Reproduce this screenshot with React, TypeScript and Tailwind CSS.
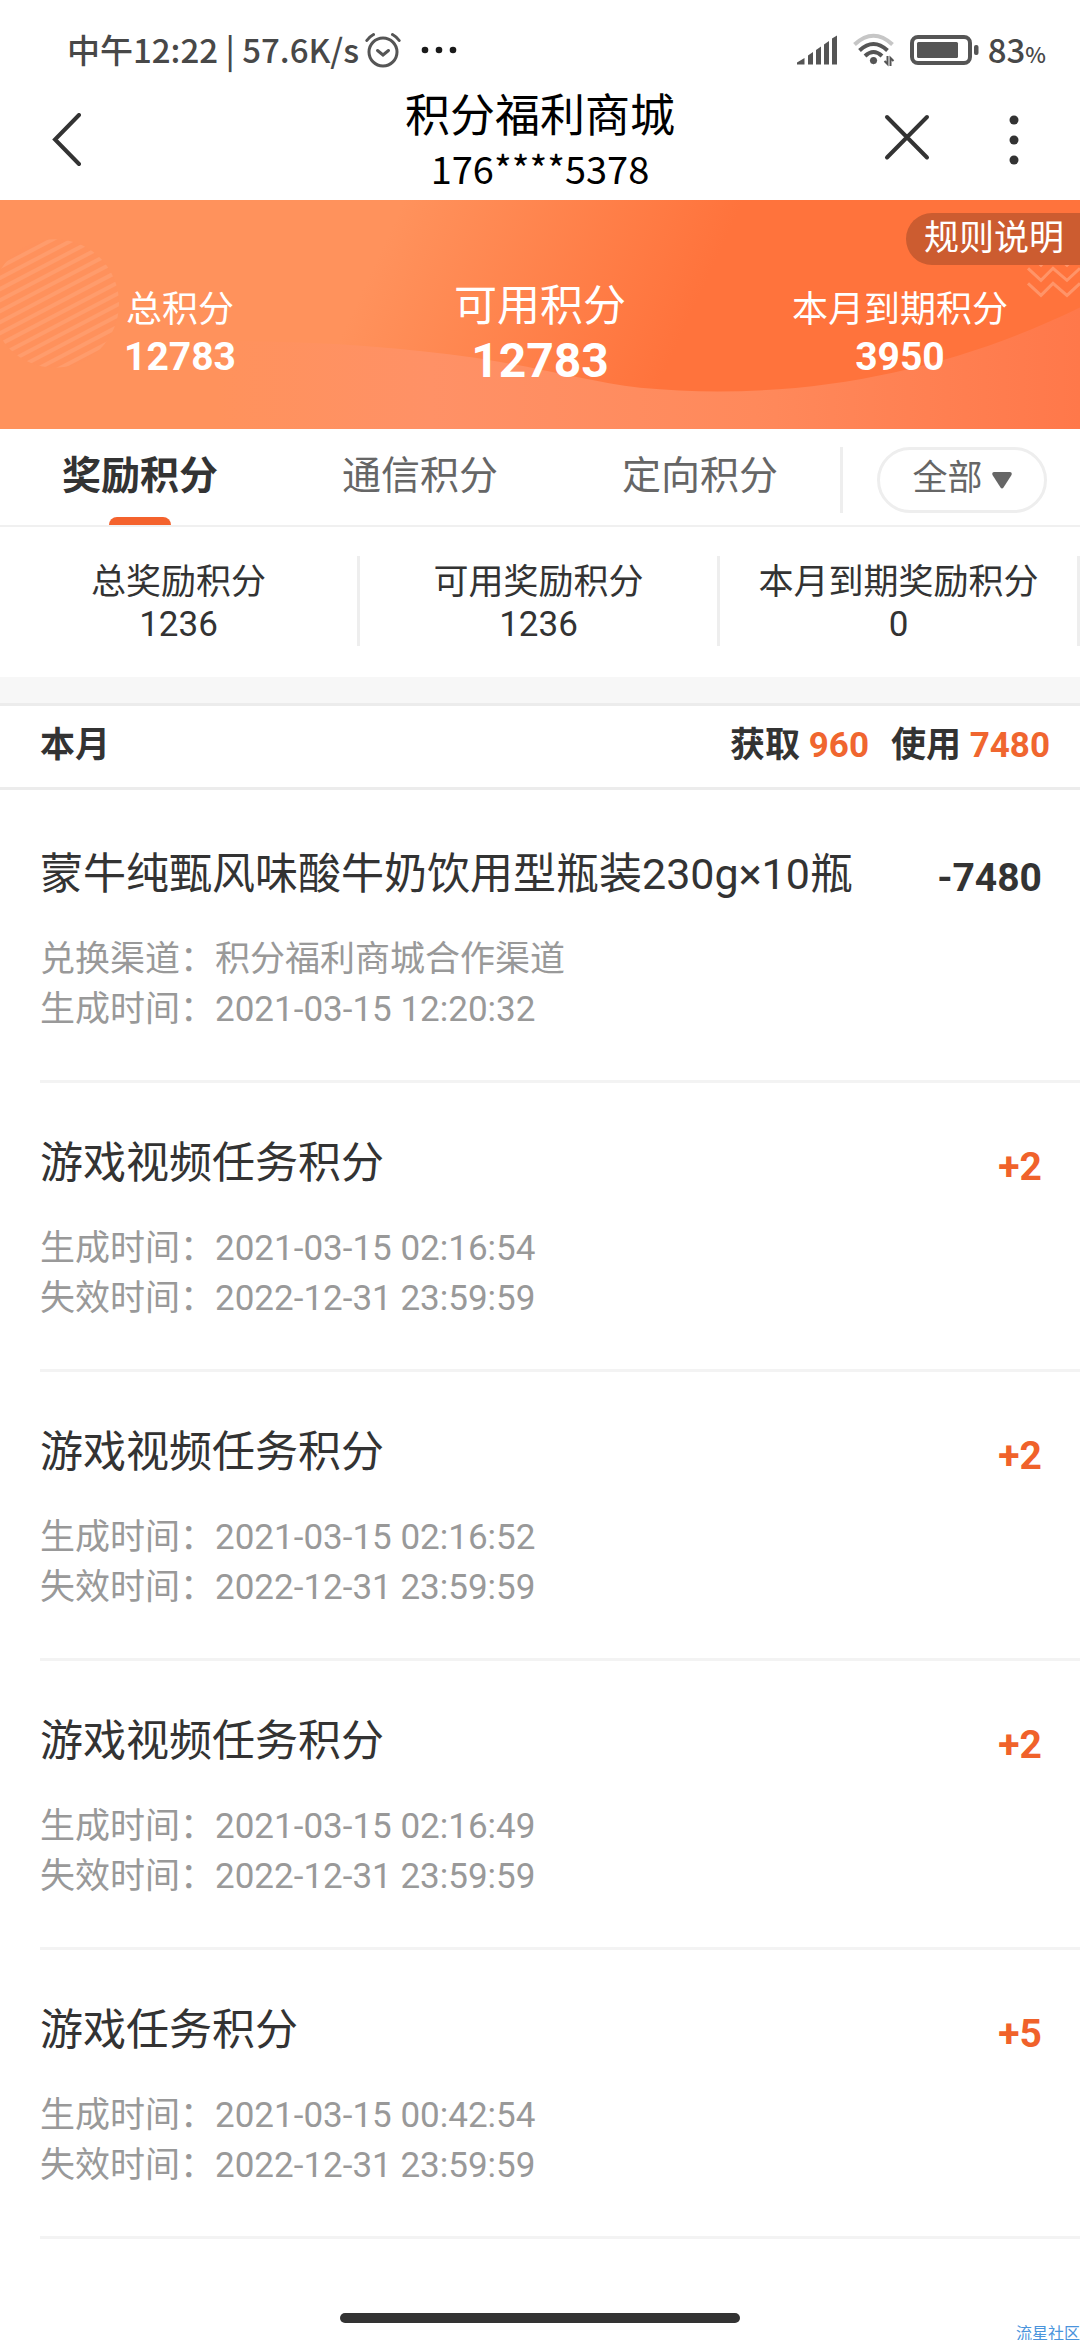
import { useState } from 'react';
import clsx from 'clsx';

interface PointRecord {
  title: string;
  amount: number;
  details: { label: string; value: string }[];
}

const RECORDS: PointRecord[] = [
  {
    title: '蒙牛纯甄风味酸牛奶饮用型瓶装230g×10瓶',
    amount: -7480,
    details: [
      { label: '兑换渠道', value: '积分福利商城合作渠道' },
      { label: '生成时间', value: '2021-03-15 12:20:32' },
    ],
  },
  {
    title: '游戏视频任务积分',
    amount: 2,
    details: [
      { label: '生成时间', value: '2021-03-15 02:16:54' },
      { label: '失效时间', value: '2022-12-31 23:59:59' },
    ],
  },
  {
    title: '游戏视频任务积分',
    amount: 2,
    details: [
      { label: '生成时间', value: '2021-03-15 02:16:52' },
      { label: '失效时间', value: '2022-12-31 23:59:59' },
    ],
  },
  {
    title: '游戏视频任务积分',
    amount: 2,
    details: [
      { label: '生成时间', value: '2021-03-15 02:16:49' },
      { label: '失效时间', value: '2022-12-31 23:59:59' },
    ],
  },
  {
    title: '游戏任务积分',
    amount: 5,
    details: [
      { label: '生成时间', value: '2021-03-15 00:42:54' },
      { label: '失效时间', value: '2022-12-31 23:59:59' },
    ],
  },
];

const TABS = ['奖励积分', '通信积分', '定向积分'];

const STATS = [
  { label: '总奖励积分', value: 1236 },
  { label: '可用奖励积分', value: 1236 },
  { label: '本月到期奖励积分', value: 0 },
];

function AlarmIcon() {
  return (
    <svg width="36" height="36" viewBox="0 0 36 36" fill="none" stroke="#555" strokeWidth="3" strokeLinecap="round">
      <circle cx="18" cy="20" r="14" />
      <path d="M12.5 18.5l5.5 4.5 5.5-4.5" />
      <path d="M1.8 8.5A20 20 0 0 1 8.5 2.5M34.2 8.5A20 20 0 0 0 27.5 2.5" />
    </svg>
  );
}

function SignalIcon() {
  return (
    <svg width="42" height="30" viewBox="0 0 42 30" fill="#555">
      <path d="M1 29.5v-2L8.5 23v6.5z" />
      <path d="M12 29.5V20.5L17 17v12.5z" />
      <path d="M20 29.5V15L25 11.5v18z" />
      <path d="M28 29.5V9.5L33 6v23.5z" />
      <path d="M36 29.5V3.5L41 .5v29z" />
    </svg>
  );
}

function WifiIcon() {
  return (
    <svg width="44" height="34" viewBox="0 0 44 34" fill="none" stroke="#555" strokeWidth="4">
      <path d="M2.5 11.5Q21.500-6 40.5 11.5" stroke="#c6c6c6" />
      <path d="M7.500 17.5Q21.500 4.500 35.500 17.5" />
      <path d="M13 23Q21.500 15 30 23" />
      <path d="M17.500 27h8l-4 4.500z" fill="#555" stroke="none" />
      <circle cx="21.500" cy="27.500" r="3.500" fill="#555" stroke="none" />
      <path d="M35.500 23v8l-3-3M38.500 33v-8l3 3" strokeWidth="2" />
    </svg>
  );
}

function BatteryIcon() {
  return (
    <svg width="70" height="30" viewBox="0 0 70 30" fill="none">
      <rect x="2" y="2" width="58" height="26" rx="6" stroke="#555" strokeWidth="4" />
      <rect x="7" y="7" width="41" height="16" rx="1.5" fill="#555" />
      <rect x="64" y="10" width="4.5" height="10" rx="2" fill="#555" />
    </svg>
  );
}

function StatusBar() {
  return (
    <div className="flex h-[85px] items-center justify-between pt-3.5 pr-[34px] pl-[67px] font-['Noto_Sans_CJK_SC',sans-serif] text-[33px] font-medium text-[#484848]">
      <div className="flex items-center">
        <span className="whitespace-pre">中午12:22 | 57.6K/s</span>
        <span className="ml-1.5">
          <AlarmIcon />
        </span>
        <svg className="ml-5" width="36" height="8" viewBox="0 0 36 8" fill="#1a1a1a">
          <circle cx="4" cy="4" r="3.3" />
          <circle cx="18" cy="4" r="3.3" />
          <circle cx="32" cy="4" r="3.3" />
        </svg>
      </div>
      <div className="flex items-center">
        <SignalIcon />
        <span className="ml-3.5">
          <WifiIcon />
        </span>
        <span className="ml-3.5">
          <BatteryIcon />
        </span>
        <span className="ml-2">
          83<span className="text-[22px]">%</span>
        </span>
      </div>
    </div>
  );
}

function Header() {
  return (
    <header className="grid grid-cols-[1fr_auto_1fr] items-center pb-[5px] font-['Noto_Sans_CJK_SC',sans-serif] text-black">
      <button type="button" aria-label="返回" className="ml-[52px] justify-self-start">
        <svg width="30" height="54" viewBox="0 0 30 54" fill="none" stroke="#333" strokeWidth="4" strokeLinecap="round">
          <path d="M27 2L3 26.5 27 51" />
        </svg>
      </button>
      <div className="text-center">
        <h1 className="text-[45px] leading-[56px]">积分福利商城</h1>
        <p className="text-[38px] leading-[54px]">176****5378</p>
      </div>
      <div className="mr-[58px] flex items-center gap-[76px] justify-self-end">
        <button type="button" aria-label="关闭">
          <svg width="46" height="54" viewBox="0 0 46 54" fill="none" stroke="#333" strokeWidth="4" strokeLinecap="round">
            <path d="M3 4l40 40.5M43 4L3 44.5" />
          </svg>
        </button>
        <button type="button" aria-label="更多">
          <svg width="16" height="54" viewBox="0 0 16 54" fill="#333">
            <circle cx="8" cy="7" r="4.5" />
            <circle cx="8" cy="27" r="4.5" />
            <circle cx="8" cy="47" r="4.5" />
          </svg>
        </button>
      </div>
    </header>
  );
}

function BannerArt() {
  return (
    <svg className="absolute inset-0 size-full" viewBox="0 0 1080 228" preserveAspectRatio="none">
      <defs>
        <linearGradient id="base" gradientUnits="userSpaceOnUse" x1="390" y1="30" x2="670" y2="160">
          <stop offset="0" stopColor="#ff925c" />
          <stop offset="1" stopColor="#ff733c" />
        </linearGradient>
        <linearGradient id="wave" x1="0" y1="0" x2="1" y2="0">
          <stop offset="0" stopColor="#ff925c" />
          <stop offset="0.2" stopColor="#ff925c" />
          <stop offset="0.4" stopColor="#ff9166" />
          <stop offset="0.7" stopColor="#ff895b" />
          <stop offset="1" stopColor="#ff784a" />
        </linearGradient>
        <clipPath id="disc">
          <circle cx="55" cy="103" r="64" />
        </clipPath>
      </defs>
      <rect width="1080" height="228" fill="url(#base)" />
      <path d="M0 150C160 136 330 136 475 157C545 168 590 181 640 187C800 202 950 170 1080 107V228H0z" fill="url(#wave)" />
      <g clipPath="url(#disc)" stroke="#ffa377" strokeWidth="4" opacity="0.6">
        {Array.from({ length: 18 }, (_, i) => (
          <path key={i} d={`M-12 ${40 + i * 11}L122 ${-30 + i * 11}`} />
        ))}
      </g>
      <g fill="none" stroke="#ff9468" strokeWidth="3">
        <path d="M1028 53l13 12 12-12 14 12 13-12" />
        <path d="M1028 68l13 12 12-12 14 12 13-12" />
        <path d="M1028 83l13 12 12-12 14 12 13-12" />
      </g>
    </svg>
  );
}

function Banner() {
  return (
    <section className="relative h-[229px] text-white">
      <BannerArt />
      <div className="relative grid h-full grid-cols-3 text-center">
        <div className="pt-[88px]">
          <p className="text-4xl leading-[44px]">总积分</p>
          <p className="text-[39px] leading-[50px] font-bold">12783</p>
        </div>
        <div className="pt-20">
          <p className="text-[43px] leading-[52px]">可用积分</p>
          <p className="text-5xl leading-[58px] font-bold">12783</p>
        </div>
        <div className="pt-[88px]">
          <p className="text-4xl leading-[44px]">本月到期积分</p>
          <p className="text-[39px] leading-[50px] font-bold">3950</p>
        </div>
      </div>
      <button type="button" className="absolute top-[13px] right-0 h-[52px] rounded-l-full bg-[#cc5c30] pr-4 pl-[18px] text-[35px] leading-[52px]">
        规则说明
      </button>
    </section>
  );
}

function TabBar() {
  const [active, setActive] = useState(TABS[0]);

  return (
    <nav className="flex h-[98px] items-stretch border-b-2 border-[#f0f0f0]">
      <div role="tablist" className="grid flex-7 grid-cols-3">
        {TABS.map((tab) => (
          <button
            key={tab}
            type="button"
            role="tab"
            aria-selected={tab === active}
            onClick={() => setActive(tab)}
            className={clsx(
              'flex flex-col items-center justify-between pt-[22px] text-[39px] leading-[50px]',
              tab === active ? 'font-bold text-[#333]' : 'text-[#666]',
            )}
          >
            {tab}
            {tab === active && <span className="h-2 w-[62px] rounded-t-lg bg-[#f4622d]" />}
          </button>
        ))}
      </div>
      <div className="flex flex-2 items-center justify-center pt-1.5">
        <span className="h-[66px] w-[3px] bg-[#eee]" />
        <label className="relative mx-auto flex h-[66px] items-center rounded-full border-[3px] border-[#eee] text-[#666]">
          <select aria-label="积分类型" className="h-full w-[164px] appearance-none bg-transparent pb-0.5 pl-[33px] text-[35px] outline-none">
            <option>全部</option>
            <option>获取</option>
            <option>使用</option>
          </select>
          <svg className="pointer-events-none absolute right-8" width="20" height="17" viewBox="0 0 20 17" fill="#666">
            <path d="M2 0h16q2.5.5 1.5 3L11.5 15.500q-1.500 1.800-3 0L.5 3Q-.5.5 2 0z" />
          </svg>
        </label>
      </div>
    </nav>
  );
}

function Stats() {
  return (
    <section className="grid grid-cols-3 pt-[29px] pb-[31px] text-center text-[35px] leading-[42px] text-[#333]">
      {STATS.map((stat) => (
        <div key={stat.label} className="h-[90px] border-r-[3px] border-[#eee] pt-1.5">
          <p className="whitespace-nowrap">{stat.label}</p>
          <p>{stat.value}</p>
        </div>
      ))}
    </section>
  );
}

function MonthSummary() {
  return (
    <section className="flex h-[87px] items-center justify-between border-y-[3px] border-[#ececec] pr-[30px] pb-px pl-10 text-[35px] font-bold text-[#333]">
      <h2>本月</h2>
      <p className="flex gap-[22px]">
        <span>
          获取 <span className="text-[#f0662f]">960</span>
        </span>
        <span>
          使用 <span className="text-[#f0662f]">7480</span>
        </span>
      </p>
    </section>
  );
}

function RecordItem({ record }: { record: PointRecord }) {
  const gained = record.amount > 0;

  return (
    <li className="border-b-[3px] border-[#f3f3f3] pt-[50px] pr-[38px] pb-[45px]">
      <div className="flex items-center justify-between">
        <h3 className="text-[43px] leading-[60px] text-[#333]">{record.title}</h3>
        <span className={clsx('pt-2 text-[39px] leading-[52px] font-bold', gained ? 'text-[#f0622b]' : 'text-[#333]')}>
          {gained ? `+${record.amount}` : record.amount}
        </span>
      </div>
      <dl className="pt-[31px] text-[35px] leading-[50px] text-[#999]">
        {record.details.map((detail) => (
          <div key={detail.label} className="flex">
            <dt>{detail.label}：</dt>
            <dd>{detail.value}</dd>
          </div>
        ))}
      </dl>
    </li>
  );
}

export default function App() {
  return (
    <div className="relative flex min-h-screen flex-col bg-white font-['Roboto','Noto_Sans_CJK_SC',sans-serif]">
      <StatusBar />
      <Header />
      <main className="flex-1">
        <Banner />
        <TabBar />
        <Stats />
        <div className="h-[26px] bg-[#f7f7f7]" />
        <MonthSummary />
        <ul className="pt-1 pl-10">
          {RECORDS.map((record, i) => (
            <RecordItem key={i} record={record} />
          ))}
        </ul>
      </main>
      <div className="flex justify-center pb-[17px]">
        <span className="h-2.5 w-[400px] rounded-full bg-[#333]" />
      </div>
      <span className="absolute right-0 bottom-0 font-['Noto_Sans_CJK_SC',sans-serif] text-base leading-4 text-[#4a94dc]">
        流星社区
      </span>
    </div>
  );
}
